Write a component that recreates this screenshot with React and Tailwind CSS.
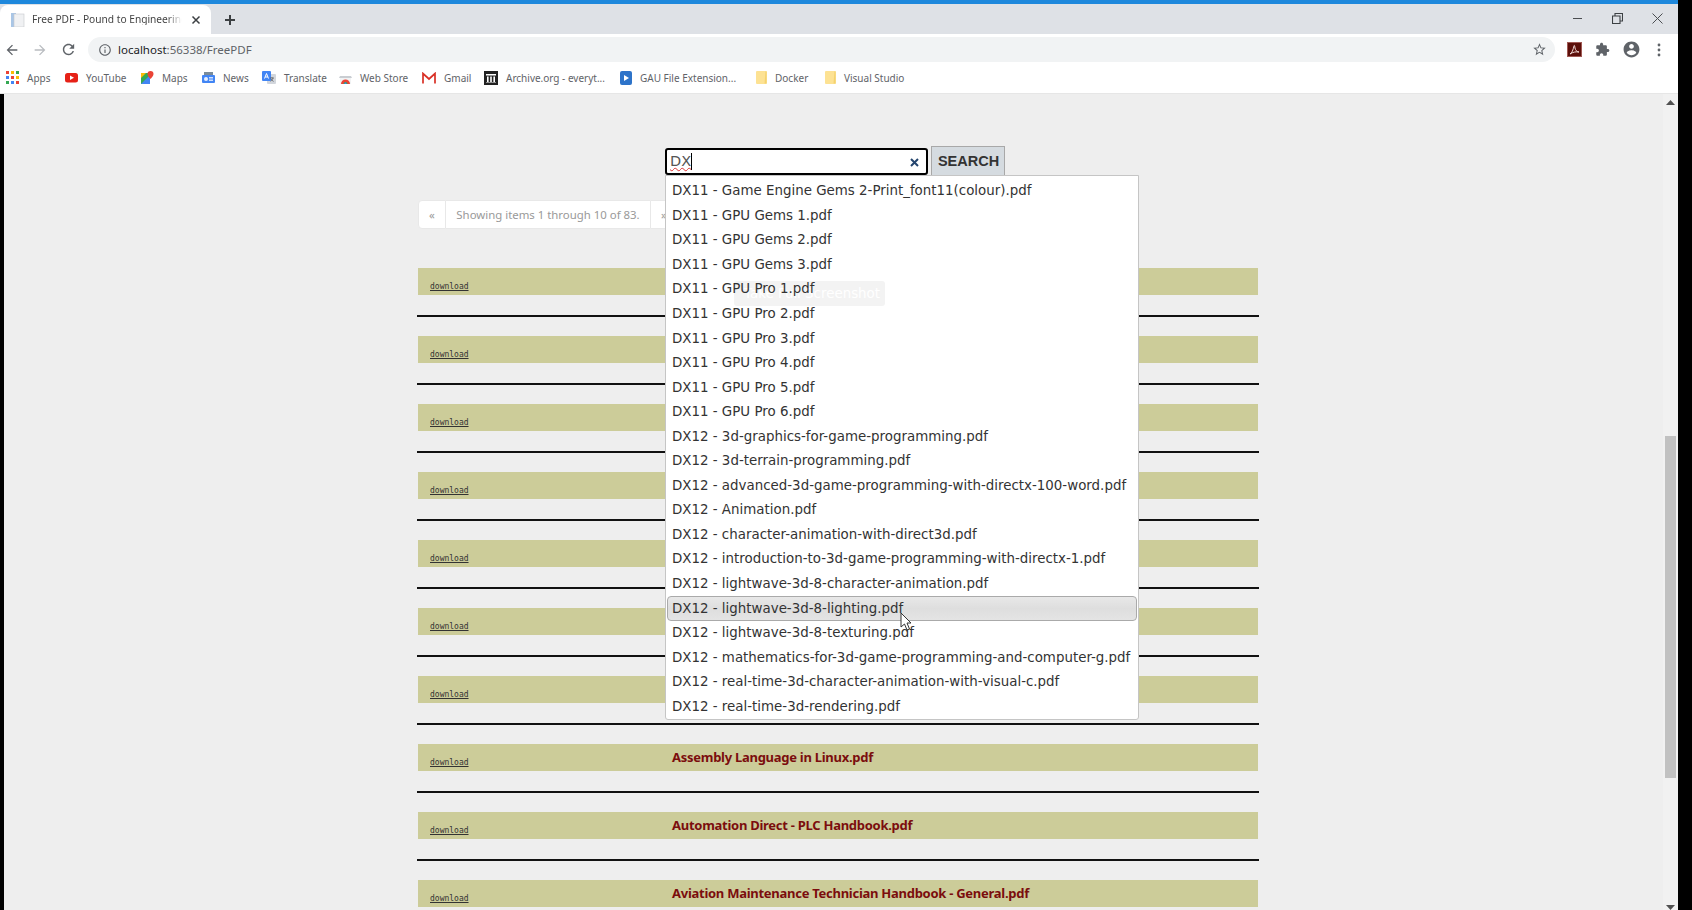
import React from "react";

const Mat = ({ d, className = "", size = 18, fill = "#5f6368" }) => (
  <svg width={size} height={size} viewBox="0 0 24 24" className={"shrink-0 " + className} fill={fill}><path d={d} /></svg>
);

const icons = {
  back: "M20 11H7.83l5.59-5.59L12 4l-8 8 8 8 1.41-1.41L7.83 13H20v-2z",
  forward: "M4 11h12.17l-5.59-5.59L12 4l8 8-8 8-1.41-1.41L16.17 13H4v-2z",
  reload: "M17.65 6.35C16.2 4.9 14.21 4 12 4c-4.42 0-7.99 3.58-7.99 8s3.57 8 7.99 8c3.73 0 6.84-2.55 7.73-6h-2.08c-.82 2.33-3.04 4-5.65 4-3.31 0-6-2.69-6-6s2.69-6 6-6c1.66 0 3.14.69 4.22 1.78L13 11h7V4l-2.35 2.35z",
  info: "M11 7h2v2h-2zm0 4h2v6h-2zm1-9C6.48 2 2 6.48 2 12s4.48 10 10 10 10-4.48 10-10S17.52 2 12 2zm0 18c-4.41 0-8-3.59-8-8s3.59-8 8-8 8 3.59 8 8-3.59 8-8 8z",
  star: "M22 9.24l-7.19-.62L12 2 9.19 8.63 2 9.24l5.46 4.73L5.82 21 12 17.27 18.18 21l-1.63-7.03L22 9.24zM12 15.4l-3.76 2.27 1-4.28-3.32-2.88 4.38-.38L12 6.1l1.71 4.04 4.38.38-3.32 2.88 1 4.28L12 15.4z",
  puzzle: "M20.5 11H19V7c0-1.1-.9-2-2-2h-4V3.5C13 2.12 11.88 1 10.5 1S8 2.12 8 3.5V5H4c-1.1 0-1.99.9-1.99 2v3.8H3.5c1.49 0 2.7 1.21 2.7 2.7s-1.21 2.7-2.7 2.7H2V20c0 1.1.9 2 2 2h3.8v-1.5c0-1.49 1.21-2.7 2.7-2.7 1.49 0 2.7 1.21 2.7 2.7V22H17c1.1 0 2-.9 2-2v-4h1.5c1.38 0 2.5-1.12 2.5-2.5S21.88 11 20.5 11z",
  account: "M12 2C6.48 2 2 6.48 2 12s4.48 10 10 10 10-4.48 10-10S17.52 2 12 2zm0 3c1.66 0 3 1.34 3 3s-1.34 3-3 3-3-1.34-3-3 1.34-3 3-3zm0 14.2c-2.5 0-4.71-1.28-6-3.22.03-1.99 4-3.08 6-3.08 1.99 0 5.97 1.09 6 3.08-1.29 1.94-3.5 3.22-6 3.22z",
};

const AppsIcon = () => (
  <svg width="13" height="13" viewBox="0 0 13 13" className="shrink-0">
    {[["#ea4335", "#fbbc04", "#34a853"], ["#4285f4", "#ea4335", "#fbbc04"], ["#34a853", "#4285f4", "#ea4335"]].flatMap((row, r) =>
      row.map((c, i) => <rect key={r + "-" + i} x={i * 5} y={r * 5} width="3" height="3" fill={c} />)
    )}
  </svg>
);
const YouTubeIcon = () => (
  <svg width="13" height="13" viewBox="0 0 13 13" className="shrink-0">
    <rect x="0" y="2" width="13" height="9.5" rx="2.5" fill="#e62117" /><path d="M5 4.6 9 6.7 5 8.9z" fill="#fff" />
  </svg>
);
const MapsIcon = () => (
  <svg width="13" height="13" viewBox="0 0 13 13" className="shrink-0">
    <path d="M0 2h9v11H0z" fill="#34a853" /><path d="M0 13 9 4v9z" fill="#4285f4" /><path d="M0 2h5L0 7z" fill="#fbbc04" />
    <path d="M9.5 0a3 3 0 0 1 3 3c0 2-3 5-3 5s-3-3-3-5a3 3 0 0 1 3-3z" fill="#ea4335" />
  </svg>
);
const NewsIcon = () => (
  <svg width="13" height="13" viewBox="0 0 13 13" className="shrink-0">
    <path d="M2 1h9v4H2z" fill="#7a8b99" /><rect x="0" y="4" width="13" height="8" rx="1" fill="#4285f4" /><rect x="7" y="6" width="4" height="1.5" fill="#cfe0fb" /><rect x="7" y="8.5" width="4" height="1.5" fill="#cfe0fb" /><circle cx="4" cy="8" r="2" fill="#e8f0fe" />
  </svg>
);
const TranslateIcon = () => (
  <svg width="14" height="13" viewBox="0 0 14 13" className="shrink-0">
    <rect x="5" y="3" width="9" height="10" rx="1" fill="#d2d6dc" /><rect x="0" y="0" width="9" height="10" rx="1" fill="#4285f4" /><path d="M2.5 7.5 4.5 2.5 6.5 7.5M3.2 6h2.6" stroke="#fff" strokeWidth="1" fill="none" /><path d="M8 7h4M10 6v1M11 7c-.4 1.5-1.5 2.7-2.6 3.3M9 8c.5 1 1.4 1.8 2.6 2.4" stroke="#5f6368" strokeWidth=".8" fill="none" />
  </svg>
);
const StoreIcon = () => (
  <svg width="13" height="13" viewBox="0 0 13 13" className="shrink-0">
    <path d="M1 5h11l1 2H0z" fill="#c9cdd2" /><path d="M1 13V7h11v6z" fill="#f1f3f4" /><path d="M2 13a4.5 4.5 0 0 1 9 0z" fill="#ea4335" /><path d="M4.5 13a2 2 0 0 1 4 0z" fill="#34a853" /><circle cx="6.5" cy="12.5" r="1" fill="#4285f4" />
  </svg>
);
const GmailIcon = () => (
  <svg width="14" height="12" viewBox="0 0 14 12" className="shrink-0" fill="none">
    <path d="M1 11.5V1.5L7 7l6-5.5v10" stroke="#d93025" strokeWidth="1.7" />
  </svg>
);
const ArchiveIcon = () => (
  <svg width="14" height="14" viewBox="0 0 14 14" className="shrink-0">
    <rect width="14" height="14" fill="#222" /><path d="M2 3h10v1.5H2zM3 5.5h1.6v5.5H3zM6.2 5.5h1.6v5.5H6.2zM9.4 5.5H11v5.5H9.4zM2 11.4h10V12H2z" fill="#fff" />
  </svg>
);
const GauIcon = () => (
  <svg width="12" height="14" viewBox="0 0 12 14" className="shrink-0">
    <rect width="12" height="14" rx="2" fill="#2d73c9" /><path d="M4 4l5 3-5 3z" fill="#fff" />
  </svg>
);
const FolderIcon = () => (
  <svg width="11" height="13" viewBox="0 0 11 13" className="shrink-0">
    <rect width="11" height="13" rx="1" fill="#fde293" /><path d="M9.5 0.5h1v12h-2z" fill="#f4d26f" />
  </svg>
);

const bookmarks = [
  [AppsIcon, "Apps", "w-[22px]"],
  [YouTubeIcon, "YouTube", "w-[39px]"],
  [MapsIcon, "Maps", "w-[24px]"],
  [NewsIcon, "News", "w-[23px]"],
  [TranslateIcon, "Translate", "w-[39px]"],
  [StoreIcon, "Web Store", "w-[46px]"],
  [GmailIcon, "Gmail", "w-[24px]"],
  [ArchiveIcon, "Archive.org - everyt...", "w-[98px]"],
  [GauIcon, "GAU File Extension...", "w-[100px]"],
  [FolderIcon, "Docker", "w-[34px]"],
  [FolderIcon, "Visual Studio", "w-[60px]"],
];

const suggestions = [
  "DX11 - Game Engine Gems 2-Print_font11(colour).pdf",
  "DX11 - GPU Gems 1.pdf",
  "DX11 - GPU Gems 2.pdf",
  "DX11 - GPU Gems 3.pdf",
  "DX11 - GPU Pro 1.pdf",
  "DX11 - GPU Pro 2.pdf",
  "DX11 - GPU Pro 3.pdf",
  "DX11 - GPU Pro 4.pdf",
  "DX11 - GPU Pro 5.pdf",
  "DX11 - GPU Pro 6.pdf",
  "DX12 - 3d-graphics-for-game-programming.pdf",
  "DX12 - 3d-terrain-programming.pdf",
  "DX12 - advanced-3d-game-programming-with-directx-100-word.pdf",
  "DX12 - Animation.pdf",
  "DX12 - character-animation-with-direct3d.pdf",
  "DX12 - introduction-to-3d-game-programming-with-directx-1.pdf",
  "DX12 - lightwave-3d-8-character-animation.pdf",
  "DX12 - lightwave-3d-8-lighting.pdf",
  "DX12 - lightwave-3d-8-texturing.pdf",
  "DX12 - mathematics-for-3d-game-programming-and-computer-g.pdf",
  "DX12 - real-time-3d-character-animation-with-visual-c.pdf",
  "DX12 - real-time-3d-rendering.pdf",
];

const rows = ["", "", "", "", "", "", "", "Assembly Language in Linux.pdf", "Automation Direct - PLC Handbook.pdf", "Aviation Maintenance Technician Handbook - General.pdf"];

function TabStrip() {
  return (
    <div className="flex items-end h-[30px] bg-[#dee1e6] shrink-0">
      <div className="flex items-center w-[211px] h-[29px] bg-white rounded-t-lg pl-[11px] pr-[10px]">
        <svg width="14" height="14" viewBox="0 0 14 14" className="shrink-0">
          <rect x="0" y="0" width="5" height="14" fill="#a9c6e6" /><rect x="3" y="1" width="10" height="13" fill="#f0f1f3" stroke="#c5c8cc" strokeWidth=".6" />
        </svg>
        <span className="ml-[7px] w-[152px] overflow-hidden whitespace-nowrap text-[10.2px] text-[#444] leading-none [mask-image:linear-gradient(to_right,black_90%,transparent)]">Free PDF - Pound to Engineering</span>
        <svg width="10" height="10" viewBox="0 0 10 10" className="ml-[9px] shrink-0" stroke="#3c4043" strokeWidth="1.5"><path d="M1.5 1.5l7 7M8.5 1.5l-7 7" /></svg>
      </div>
      <svg width="12" height="12" viewBox="0 0 12 12" className="ml-[13px] mb-[8px]" stroke="#3c4043" strokeWidth="2"><path d="M6 1v10M1 6h10" /></svg>
      <div className="ml-auto flex items-center h-full mb-[1px]">
        <svg width="11" height="11" viewBox="0 0 11 11" stroke="#4a4d51" strokeWidth="1"><path d="M1 5.5h9" /></svg>
        <svg width="11" height="11" viewBox="0 0 11 11" className="ml-[29px]" fill="none" stroke="#3c4043" strokeWidth="1.1"><path d="M.5 3h7.5v7.5H.5zM3 3V.5h7.5V8H8" /></svg>
        <svg width="11" height="11" viewBox="0 0 11 11" className="ml-[29px] mr-[15px]" stroke="#4a4d51" strokeWidth="1"><path d="M.5.5l10 10M10.5.5l-10 10" /></svg>
      </div>
    </div>
  );
}

function Toolbar() {
  return (
    <div className="flex items-center h-[28px] bg-white shrink-0 pl-[4px] pt-[3px]">
      <Mat d={icons.back} size={16} fill="#5f6368" />
      <Mat d={icons.forward} size={16} fill="#b9bcc0" className="ml-[12px]" />
      <Mat d={icons.reload} size={17} fill="#5f6368" className="ml-[12px]" />
      <div className="ml-[11px] flex items-center w-[1467px] h-[25px] rounded-full bg-[#f1f3f4] pl-[10px] pr-[8px]">
        <Mat d={icons.info} size={14} fill="#5f6368" />
        <span className="ml-[6px] text-[11.5px] text-[#5f6368] leading-none"><span className="text-[#202124]">localhost</span>:56338/FreePDF</span>
        <Mat d={icons.star} size={15} fill="#5f6368" className="ml-auto" />
      </div>
      <div className="ml-[12px] w-[15px] h-[15px] shrink-0 bg-[#5c0f0a] border border-[#a05a55] flex items-center justify-center">
        <svg width="11" height="11" viewBox="0 0 11 11" fill="none" stroke="#f0d8d5" strokeWidth="1"><path d="M1 10c2-1 3-4 4-8 .3-1.5.8 0 1 2 .3 2 2 4 4 4-3-.5-6 0-9 2z" /></svg>
      </div>
      <Mat d={icons.puzzle} size={15} fill="#5f6368" className="ml-[13px]" />
      <Mat d={icons.account} size={19} fill="#5f6368" className="ml-[12px]" />
      <svg width="4" height="14" viewBox="0 0 4 14" className="ml-[16px]" fill="#5f6368"><circle cx="2" cy="2" r="1.4" /><circle cx="2" cy="7" r="1.4" /><circle cx="2" cy="12" r="1.4" /></svg>
    </div>
  );
}

function Bookmarks() {
  return (
    <div className="flex items-center h-[32px] bg-white border-b border-[#e6e6e6] shrink-0 pl-[6px]">
      {bookmarks.map(([Icon, label, w], i) => (
        <div key={i} className="flex items-center gap-[8px] mr-[16px]">
          <Icon />
          <span className={"text-[10px] text-[#5f6368] whitespace-nowrap leading-none " + w}>{label}</span>
        </div>
      ))}
    </div>
  );
}

function ResultRow({ title }) {
  return (
    <div className="h-[68px] shrink-0">
      <div className="flex h-[27px] w-[840px] ml-[1px] bg-[#cccc99]">
        <a className="w-[254px] pl-[12px] pt-[13px] text-[8px] leading-[12px] text-[#333] underline" style={{ fontFamily: '"DejaVu Sans Mono", monospace' }}>download</a>
        <span className="pt-[5px] text-[13px] tracking-[-0.27px] leading-[16px] font-bold text-[#7b0d0d] whitespace-nowrap">{title}</span>
      </div>
      <div className="mt-[20px] h-[2px] w-[842px] bg-[#111]" />
    </div>
  );
}

function Dropdown() {
  return (
    <div className="absolute left-[661px] top-[81px] z-10 w-[474px] h-[545px] bg-white border border-[#c5c5c5] rounded-b-[3px] pt-[3px] px-[1px]" style={{ fontFamily: '"DejaVu Sans", sans-serif' }}>
      <div className="absolute left-[68px] top-[105px] w-[151px] h-[25px] rounded-[3px] bg-[#f3f3f3] text-[13.4px] leading-[25px] text-white pl-[10px]">Take Full Screenshot</div>
      {suggestions.map((s, i) => (
        <div key={i} className={"relative h-[24.55px] pl-[4px] flex items-center whitespace-nowrap text-[13.4px] text-[#333] border rounded-[4px] " + (i === 17 ? "border-[#aaaaaa] bg-gradient-to-b from-[#e8e8e8] via-[#dedede] to-[#e4e4e4]" : "border-transparent")}>{s}</div>
      ))}
      <svg width="12" height="19" viewBox="0 0 12 19" className="absolute left-[234px] top-[436px]"><path d="M1 1v14l3.5-3 2.5 6 2.5-1-2.5-6H11z" fill="#fff" stroke="#333" strokeWidth="1" /></svg>
    </div>
  );
}

export default function App() {
  return (
    <div className="flex h-[910px] w-[1692px] overflow-hidden bg-black" style={{ fontFamily: '"Noto Sans", sans-serif' }}>
      <div className="flex flex-col w-[1678px] shrink-0">
        <div className="h-[4px] bg-[#1e88dc] shrink-0" />
        <TabStrip />
        <Toolbar />
        <Bookmarks />
        <div className="flex flex-1 min-h-0 bg-black">
          <div className="w-[4px] shrink-0" />
          <main className="relative flex-1 bg-[#eeeeee] pt-[52px] pl-[413px] overflow-hidden">
            <div className="flex items-start ml-[248px] h-[30px]">
              <div className="relative flex items-center w-[263px] h-[27px] mt-[2px] bg-white border-2 border-black rounded-[3px] pl-[3px]">
                <span className="relative text-[14.5px] text-[#555] leading-none decoration-wavy decoration-[#d33] decoration-1 underline" style={{ fontFamily: '"DejaVu Sans", sans-serif' }}>DX</span>
                <span className="w-[1px] h-[17px] bg-black" />
                <svg width="9" height="9" viewBox="0 0 9 9" className="absolute right-[7px] top-[8px]" stroke="#24456e" strokeWidth="2"><path d="M1 1l7 7M8 1l-7 7" /></svg>
              </div>
              <button className="ml-[3px] w-[74px] h-[30px] pt-[1px] pl-[1px] bg-[#d5dbe0] border border-[#a8a8a8] text-[14.5px] font-bold text-[#333]" style={{ fontFamily: '"Liberation Sans", sans-serif' }}>SEARCH</button>
            </div>
            <div className="flex h-[29px] mt-[24px] ml-[1px] text-[11.4px] text-[#999]">
              <span className="w-[28px] flex items-center justify-center bg-white border border-[#e8e8e8] rounded-l-[4px]">«</span>
              <span className="w-[204px] flex items-center justify-center bg-white border-y border-[#e8e8e8]">Showing items 1 through 10 of 83.</span>
              <span className="w-[28px] flex items-center justify-center bg-white border border-[#e8e8e8] rounded-r-[4px]">»</span>
            </div>
            <div className="mt-[39px] flex flex-col">
              {rows.map((t, i) => <ResultRow key={i} title={t} />)}
            </div>
            <Dropdown />
          </main>
          <div className="relative w-[15px] shrink-0 bg-[#f1f1f1]">
            <svg width="9" height="5" viewBox="0 0 9 5" className="absolute left-[3px] top-[6px]" fill="#505050"><path d="M4.5 0 9 5H0z" /></svg>
            <div className="absolute left-[2px] top-[342px] w-[11px] h-[342px] bg-[#c1c1c1]" />
            <svg width="9" height="5" viewBox="0 0 9 5" className="absolute left-[3px] bottom-[0px]" fill="#505050"><path d="M4.5 5 9 0H0z" /></svg>
          </div>
        </div>
      </div>
    </div>
  );
}
